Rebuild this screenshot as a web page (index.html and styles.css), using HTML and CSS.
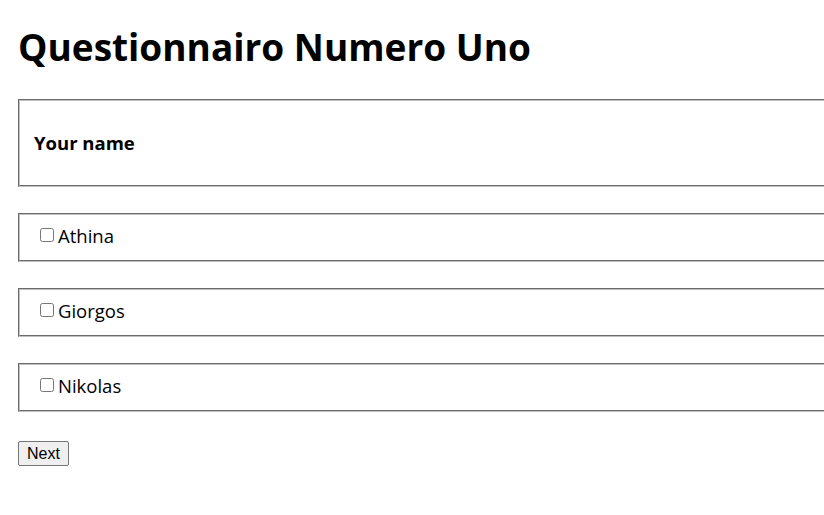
FILE: index.html
```html
<!DOCTYPE html>
<html lang="it">
<head>
<meta charset="utf-8">
<title>Questionnairo Numero Uno</title>
<link rel="stylesheet" href="styles.css">
</head>
<body>
<main class="page">
  <h1 class="title">Questionnairo Numero Uno</h1>
  <form class="form">
    <div class="box box-question">
      <span class="question">Your name</span>
    </div>
    <div class="box box-option">
      <label class="option"><input type="checkbox" class="check"><span>Athina</span></label>
    </div>
    <div class="box box-option">
      <label class="option"><input type="checkbox" class="check"><span>Giorgos</span></label>
    </div>
    <div class="box box-option">
      <label class="option"><input type="checkbox" class="check"><span>Nikolas</span></label>
    </div>
    <div class="actions">
      <button type="button" class="btn">Next</button>
    </div>
  </form>
</main>
</body>
</html>
```
FILE: styles.css
```css
html, body {
  margin: 0;
  padding: 0;
  background: #fff;
}
.page {
  padding: 0 0 0 18px;
  font-family: "Open Sans", "Noto Sans", sans-serif;
  color: #000;
}
.title {
  margin: 0;
  padding-top: 21px;
  font-size: 37px;
  line-height: 52px;
  font-weight: 700;
  letter-spacing: 0;
}
.form {
  display: flex;
  flex-direction: column;
  gap: 26px;
  margin-top: 26px;
}
.box {
  border: 2px groove #c0c0c0;
  border-right: none;
  box-sizing: border-box;
}
.box-question {
  height: 88px;
  display: flex;
  align-items: center;
  padding: 0 0 2px 14px;
}
.question {
  font-size: 18.5px;
  font-weight: 700;
}
.box-option {
  height: 49px;
  display: flex;
  align-items: center;
  padding: 0 0 4px 20px;
}
.option {
  display: flex;
  align-items: center;
  font-size: 18.5px;
  gap: 4px;
}
.check {
  margin: 0;
  width: 14px;
  height: 14px;
  position: relative;
  top: -1px;
}
.actions {
  display: flex;
  margin-top: 3px;
}
.btn {
  font-family: "Liberation Sans", Arial, sans-serif;
  font-size: 16px;
  line-height: 19px;
  padding: 2px 8px;
  height: 25px;
  border: 1px solid #767676;
  border-radius: 2px;
  background: #efefef;
  color: #000;
}
```
